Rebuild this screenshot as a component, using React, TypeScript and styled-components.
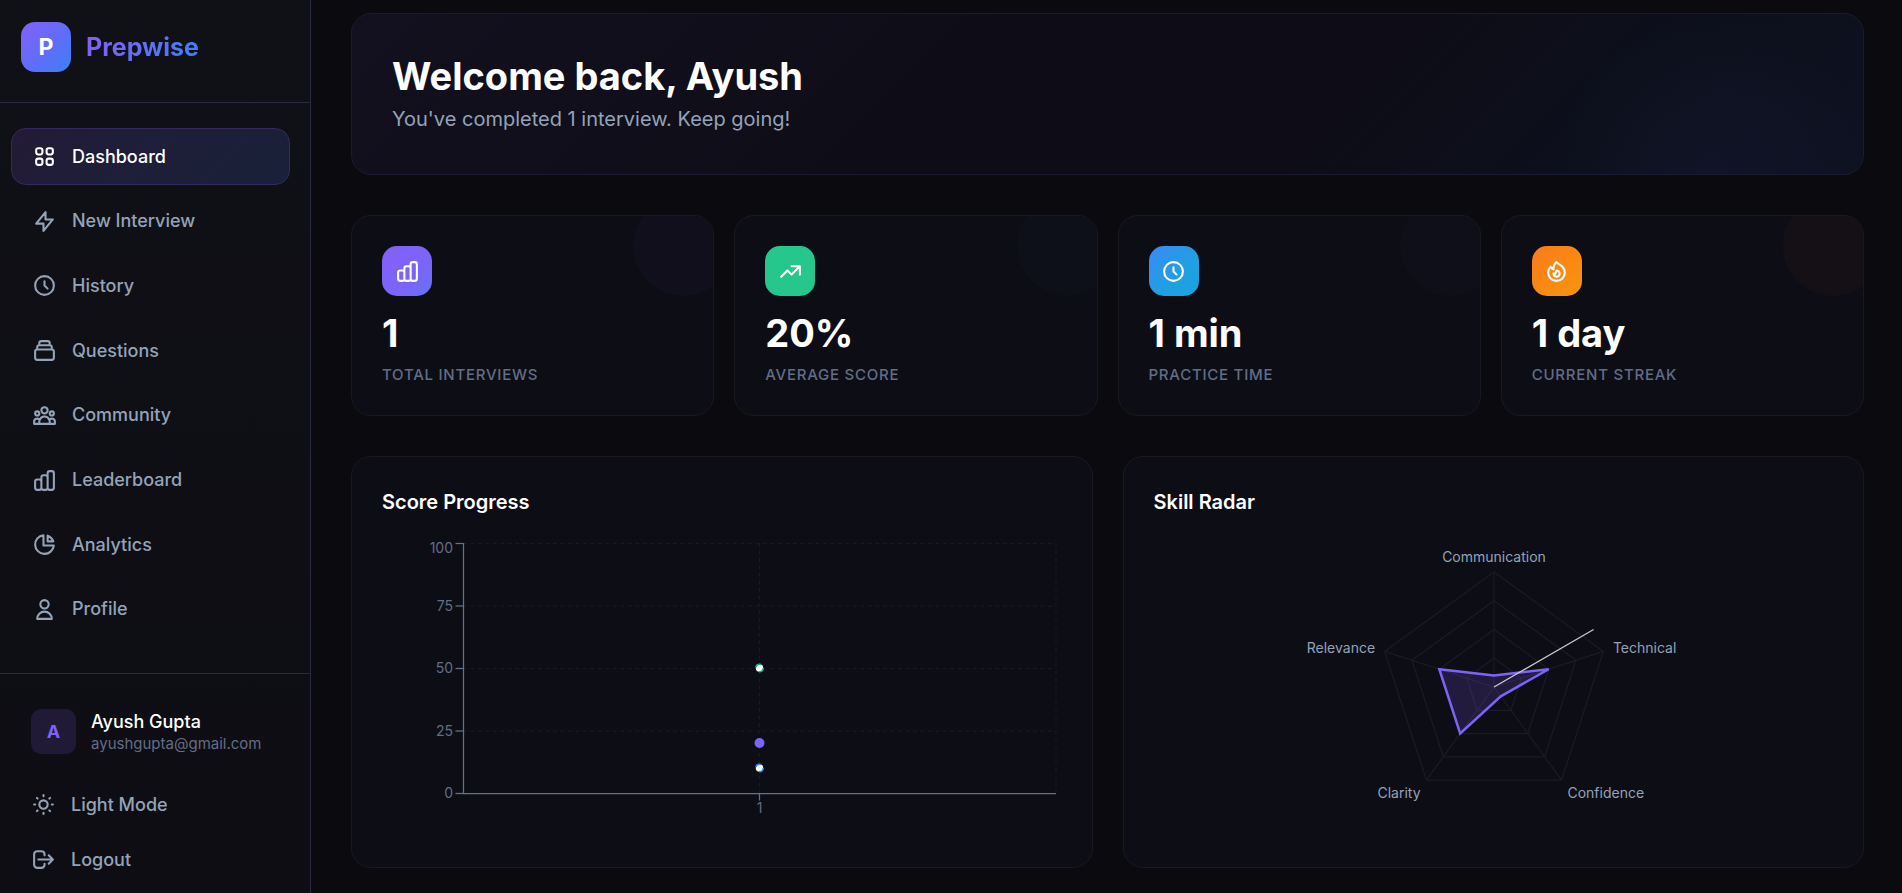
import React, { useEffect, useRef, useState } from "react";
import styled, { createGlobalStyle, css } from "styled-components";
import type { IconType } from "react-icons";
import {
  HiOutlineViewGrid,
  HiOutlineLightningBolt,
  HiOutlineClock,
  HiOutlineCollection,
  HiOutlineUserGroup,
  HiOutlineChartBar,
  HiOutlineChartPie,
  HiOutlineUser,
  HiOutlineSun,
  HiOutlineLogout,
  HiOutlineTrendingUp,
  HiOutlineFire,
} from "react-icons/hi";

const color = {
  page: "#0a0a0f",
  card: "#0d0d16",
  cardLine: "#19191f",
  line: "#292940",
  white: "#ffffff",
  muted: "#94a3b8",
  faint: "#626d87",
  axis: "#64708c",
  purple: "#7c64f8",
};

const GlobalStyle = createGlobalStyle`
  *, *::before, *::after { box-sizing: border-box; }
  body {
    margin: 0;
    background: ${color.page};
    color: ${color.white};
    font-family: Inter, "Liberation Sans", sans-serif;
  }
  h1, h2, p { margin: 0; }
`;

const Shell = styled.div`
  display: flex;
  height: 100vh;
`;

const Sidebar = styled.aside`
  display: flex;
  flex-direction: column;
  flex: 0 0 311px;
  border-right: 1px solid ${color.line};
  background: linear-gradient(180deg, #101116 0%, #0d0d13 100%);
`;

const Brand = styled.div`
  display: flex;
  align-items: center;
  gap: 15px;
  padding: 22px 21px 30px;
  border-bottom: 1px solid ${color.line};
`;

const Mark = styled.div`
  display: grid;
  place-items: center;
  width: 50px;
  height: 50px;
  border-radius: 14px;
  background: linear-gradient(135deg, #8560f8 0%, #5b6ff8 60%, #3b82f6 100%);
  font-size: 23px;
  font-weight: 700;
`;

const BrandName = styled.span`
  background: linear-gradient(135deg, #8b5cf6 0%, #3b82f6 100%);
  background-clip: text;
  color: transparent;
  font-size: 25px;
  font-weight: 700;
  line-height: 32px;
`;

const Nav = styled.nav`
  display: flex;
  flex: 1;
  flex-direction: column;
  justify-content: space-between;
  padding: 25px 20px 35px 11px;
`;

const rowText = css`
  color: ${color.muted};
  font-size: 18px;
  font-weight: 500;
  line-height: 24px;
`;

const NavLink = styled.a<{ $active?: boolean }>`
  ${rowText}
  display: flex;
  align-items: center;
  gap: 15px;
  height: 57px;
  padding: 0 20px;
  border: 1px solid transparent;
  border-radius: 15px;
  text-decoration: none;

  svg {
    width: 25px;
    height: 25px;
  }

  ${({ $active }) =>
    $active &&
    css`
      border-color: #36295f;
      background: linear-gradient(135deg, #231a36 0%, #1e1e38 40%, #192038 100%);
      color: ${color.white};
    `}
`;

const SidebarFooter = styled.footer`
  display: flex;
  flex-direction: column;
  gap: 10px;
  padding: 25px 20px 11px 20px;
  border-top: 1px solid ${color.line};
`;

const User = styled.div`
  display: flex;
  align-items: center;
  gap: 15px;
  padding: 10px 11px 18px;
`;

const Avatar = styled.div`
  display: grid;
  place-items: center;
  width: 45px;
  height: 45px;
  border-radius: 10px;
  background: #201a36;
  color: ${color.purple};
  font-size: 18px;
  font-weight: 700;
`;

const UserName = styled.div`
  font-size: 18px;
  font-weight: 500;
  line-height: 24px;
`;

const UserMail = styled.div`
  color: ${color.faint};
  font-size: 15px;
  line-height: 20px;
`;

const FooterButton = styled.button`
  ${rowText}
  display: flex;
  align-items: center;
  gap: 15px;
  height: 45px;
  padding: 0 11px;
  border: 0;
  background: none;
  font-family: inherit;
  text-align: left;

  svg {
    width: 25px;
    height: 25px;
  }
`;

const Main = styled.main`
  display: flex;
  flex: 1;
  flex-direction: column;
  gap: 40px;
  min-width: 0;
  overflow: hidden;
  padding: 13px 38px 25px 40px;
`;

const Banner = styled.section`
  flex: none;
  padding: 40px;
  border: 1px solid #1c1933;
  border-radius: 20px;
  background:
    radial-gradient(circle 160px at calc(100% - 150px) 100%, rgba(70, 70, 160, 0.07), transparent 100%),
    linear-gradient(135deg, #13101f 0%, #0e0d17 40%, #0e0d17 65%, #0c101c 82%, #0e1120 100%);
`;

const BannerTitle = styled.h1`
  font-size: 38px;
  font-weight: 700;
  line-height: 45px;
`;

const BannerText = styled.p`
  margin-top: 5px;
  color: ${color.muted};
  font-size: 20px;
  line-height: 30px;
`;

const Stats = styled.section`
  display: grid;
  flex: none;
  grid-template-columns: repeat(4, 1fr);
  gap: 20px;
`;

const Card = styled.article`
  padding: 30px;
  border: 1px solid ${color.cardLine};
  border-radius: 20px;
  background: ${color.card};
`;

const StatCard = styled(Card)<{ $glow: string }>`
  position: relative;
  overflow: hidden;

  &::after {
    content: "";
    position: absolute;
    top: -20px;
    right: -20px;
    width: 100px;
    height: 100px;
    border-radius: 50%;
    background: ${({ $glow }) => $glow};
  }
`;

const StatIcon = styled.div<{ $fill: string }>`
  display: grid;
  place-items: center;
  width: 50px;
  height: 50px;
  border-radius: 15px;
  background: ${({ $fill }) => $fill};

  svg {
    width: 25px;
    height: 25px;
  }
`;

const StatValue = styled.div`
  margin-top: 15px;
  font-size: 38px;
  font-weight: 700;
  line-height: 45px;
`;

const StatLabel = styled.div`
  margin-top: 8px;
  color: ${color.faint};
  font-size: 15px;
  font-weight: 500;
  letter-spacing: 0.05em;
  line-height: 21px;
  text-transform: uppercase;
`;

const Charts = styled.section`
  display: grid;
  flex: none;
  grid-template-columns: repeat(2, minmax(0, 1fr));
  gap: 30px;
`;

const CardTitle = styled.h2`
  margin-bottom: 20px;
  font-size: 20px;
  font-weight: 600;
  line-height: 30px;
`;

const ChartBox = styled.div`
  height: 300px;

  svg {
    display: block;
  }
`;

const Tick = styled.text`
  fill: ${color.faint};
  font-size: 14px;
`;

const RadarLabel = styled.text`
  fill: ${color.muted};
  font-size: 14px;
`;

const CHART_HEIGHT = 300;

function useWidth() {
  const ref = useRef<HTMLDivElement>(null);
  const [width, setWidth] = useState(680);
  useEffect(() => {
    const node = ref.current;
    if (!node) return;
    const update = () => setWidth(Math.round(node.clientWidth));
    update();
    const observer = new ResizeObserver(update);
    observer.observe(node);
    return () => observer.disconnect();
  }, []);
  return [ref, width] as const;
}

function ScoreChart() {
  const [ref, width] = useWidth();
  const left = 81;
  const right = width - 6;
  const top = 6;
  const bottom = 256;
  const mid = (left + right) / 2;
  const y = (value: number) => bottom - (value / 100) * (bottom - top);
  return (
    <ChartBox ref={ref}>
      <svg width={width} height={CHART_HEIGHT} role="img" aria-label="Score progress">
        <g stroke="#181921" strokeDasharray="3.75 3.75" strokeWidth="1.25">
          {[100, 75, 50, 25].map((v) => (
            <line key={v} x1={left} x2={right} y1={y(v) + 0.5} y2={y(v) + 0.5} />
          ))}
          <line x1={mid} x2={mid} y1={top} y2={bottom} />
          <line x1={right} x2={right} y1={top} y2={bottom} />
        </g>
        <g stroke={color.axis} strokeWidth="1.25">
          <line x1={left + 0.5} x2={left + 0.5} y1={top} y2={bottom} />
          <line x1={left} x2={right} y1={bottom + 0.5} y2={bottom + 0.5} />
          {[100, 75, 50, 25, 0].map((v) => (
            <line key={v} x1={left - 7.5} x2={left} y1={y(v) + 0.5} y2={y(v) + 0.5} />
          ))}
          <line x1={mid} x2={mid} y1={bottom} y2={bottom + 7.5} />
        </g>
        {[100, 75, 50, 25, 0].map((v) => (
          <Tick key={v} x={left - 10} y={v === 100 ? 16 : y(v) + 5} textAnchor="end">
            {v}
          </Tick>
        ))}
        <Tick x={mid} y={bottom + 20} textAnchor="middle">
          1
        </Tick>
        <circle cx={mid} cy={y(20)} r="5" fill={color.purple} />
        <g fill="#fff" strokeWidth="1.6" strokeDasharray="6.25 6.25">
          <circle cx={mid} cy={y(50)} r="3.75" stroke="#10b981" />
          <circle cx={mid} cy={y(10)} r="3.75" stroke="#3b82f6" />
        </g>
      </svg>
    </ChartBox>
  );
}

const skills = [
  { name: "Communication", value: 10, anchor: "middle", drop: 0 },
  { name: "Technical", value: 50, anchor: "start", drop: 5 },
  { name: "Confidence", value: 10, anchor: "start", drop: 10 },
  { name: "Clarity", value: 50, anchor: "end", drop: 10 },
  { name: "Relevance", value: 50, anchor: "end", drop: 5 },
] as const;

function RadarChart() {
  const [ref, width] = useWidth();
  const radius = 115;
  const cx = width / 2;
  const cy = CHART_HEIGHT / 2;
  const at = (index: number, distance: number) => {
    const angle = ((index * 72 - 90) * Math.PI) / 180;
    return [cx + distance * Math.cos(angle), cy + distance * Math.sin(angle)];
  };
  const ring = (distance: (index: number) => number) =>
    skills.map((_, i) => at(i, distance(i)).join(",")).join(" ");
  return (
    <ChartBox ref={ref}>
      <svg width={width} height={CHART_HEIGHT} role="img" aria-label="Skill radar">
        <g fill="none" stroke="#1b1b24" strokeWidth="1.25">
          {[0.25, 0.5, 0.75, 1].map((step) => (
            <polygon key={step} points={ring(() => radius * step)} />
          ))}
          {skills.map((skill, i) => {
            const [x, y] = at(i, radius);
            return <line key={skill.name} x1={cx} y1={cy} x2={x} y2={y} />;
          })}
        </g>
        <polygon
          points={ring((i) => (radius * skills[i].value) / 100)}
          fill="#8358f0"
          fillOpacity="0.19"
          stroke={color.purple}
          strokeWidth="2.5"
        />
        <line x1={cx} y1={cy} x2={cx + 99.6} y2={cy - 57.5} stroke="#cccccc" strokeWidth="1.25" />
        {skills.map((skill, i) => {
          const [x, y] = at(i, radius + 10);
          return (
            <RadarLabel key={skill.name} x={x} y={y + skill.drop} textAnchor={skill.anchor}>
              {skill.name}
            </RadarLabel>
          );
        })}
      </svg>
    </ChartBox>
  );
}

const navItems: { label: string; icon: IconType }[] = [
  { label: "Dashboard", icon: HiOutlineViewGrid },
  { label: "New Interview", icon: HiOutlineLightningBolt },
  { label: "History", icon: HiOutlineClock },
  { label: "Questions", icon: HiOutlineCollection },
  { label: "Community", icon: HiOutlineUserGroup },
  { label: "Leaderboard", icon: HiOutlineChartBar },
  { label: "Analytics", icon: HiOutlineChartPie },
  { label: "Profile", icon: HiOutlineUser },
];

const stats: { label: string; value: string; icon: IconType; fill: string; glow: string }[] = [
  {
    label: "Total Interviews",
    value: "1",
    icon: HiOutlineChartBar,
    fill: "linear-gradient(135deg, #8360f8 0%, #7c64f8 60%, #6670f6 100%)",
    glow: "#100f1b",
  },
  {
    label: "Average Score",
    value: "20%",
    icon: HiOutlineTrendingUp,
    fill: "#25c78c",
    glow: "#0d1018",
  },
  {
    label: "Practice Time",
    value: "1 min",
    icon: HiOutlineClock,
    fill: "linear-gradient(135deg, #3b8af6 0%, #1fa0e2 60%, #18a4dc 100%)",
    glow: "#0f0f1a",
  },
  {
    label: "Current Streak",
    value: "1 day",
    icon: HiOutlineFire,
    fill: "linear-gradient(135deg, #fb7a18 0%, #f7960f 100%)",
    glow: "#151016",
  },
];

export default function App() {
  return (
    <>
      <GlobalStyle />
      <Shell>
        <Sidebar>
          <Brand>
            <Mark>P</Mark>
            <BrandName>Prepwise</BrandName>
          </Brand>
          <Nav>
            {navItems.map(({ label, icon: Icon }, i) => (
              <NavLink key={label} href="#" $active={i === 0}>
                <Icon />
                {label}
              </NavLink>
            ))}
          </Nav>
          <SidebarFooter>
            <User>
              <Avatar>A</Avatar>
              <div>
                <UserName>Ayush Gupta</UserName>
                <UserMail>ayushgupta@gmail.com</UserMail>
              </div>
            </User>
            <FooterButton type="button">
              <HiOutlineSun />
              Light Mode
            </FooterButton>
            <FooterButton type="button">
              <HiOutlineLogout />
              Logout
            </FooterButton>
          </SidebarFooter>
        </Sidebar>
        <Main>
          <Banner>
            <BannerTitle>Welcome back, Ayush</BannerTitle>
            <BannerText>You've completed 1 interview. Keep going!</BannerText>
          </Banner>
          <Stats>
            {stats.map(({ label, value, icon: Icon, fill, glow }) => (
              <StatCard key={label} $glow={glow}>
                <StatIcon $fill={fill}>
                  <Icon />
                </StatIcon>
                <StatValue>{value}</StatValue>
                <StatLabel>{label}</StatLabel>
              </StatCard>
            ))}
          </Stats>
          <Charts>
            <Card>
              <CardTitle>Score Progress</CardTitle>
              <ScoreChart />
            </Card>
            <Card>
              <CardTitle>Skill Radar</CardTitle>
              <RadarChart />
            </Card>
          </Charts>
        </Main>
      </Shell>
    </>
  );
}
